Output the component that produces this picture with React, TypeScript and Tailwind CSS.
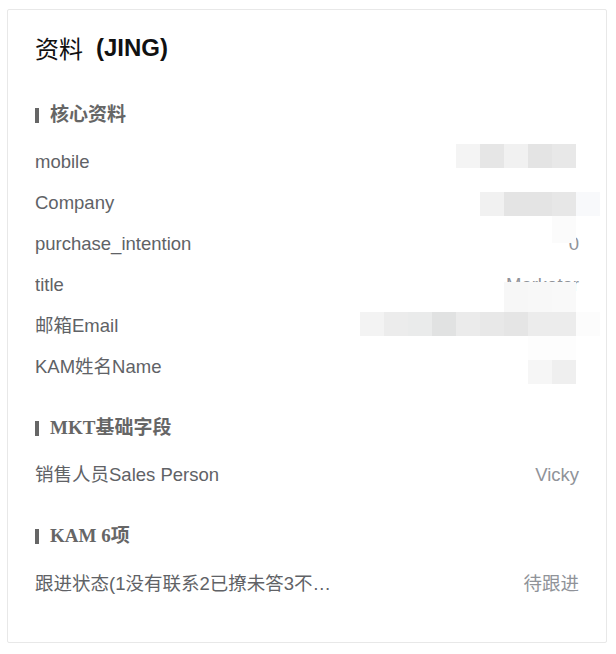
import React from 'react';

type Cell = string;

type Patch = { left: number; top: number; h: string; cells: Cell[] };

type Row = { label: string; value?: string; patches?: Patch[] };

const sans = { fontFamily: '"Liberation Sans", "Noto Sans CJK SC", sans-serif' };

const coreRows: Row[] = [
  {
    label: 'mobile',
    patches: [{ left: 421, top: 3, h: 'h-[24px]', cells: ['bg-[#f4f4f4]', 'bg-[#e6e6e6]', 'bg-[#f1f1f1]', 'bg-[#e4e4e4]', 'bg-[#e8e8e8]'] }],
  },
  {
    label: 'Company',
    patches: [{ left: 445, top: 10, h: 'h-[24px]', cells: ['bg-[#f1f1f1]', 'bg-[#e4e4e4]', 'bg-[#e4e4e4]', 'bg-[#e7e7e7]', 'bg-[#f8f9fb]'] }],
  },
  {
    label: 'purchase_intention',
    value: '0',
    patches: [{ left: 517, top: -7, h: 'h-[27px]', cells: ['bg-[#fbfbfb]'] }],
  },
  {
    label: 'title',
    value: 'Marketer',
    patches: [{ left: 469, top: 18, h: 'h-[30px]', cells: ['bg-[#f7f7f7]', 'bg-[#f8f8f8]', 'bg-[#f9f9f9]'] }],
  },
  {
    label: '邮箱Email',
    patches: [
      {
        left: 325,
        top: 7,
        h: 'h-[24px]',
        cells: [
          'bg-[#f3f3f3]', 'bg-[#ececec]', 'bg-[#eaebeb]', 'bg-[#e1e2e2]', 'bg-[#ebebeb]',
          'bg-[#e8e8e8]', 'bg-[#e5e5e5]', 'bg-[#ececec]', 'bg-[#ececec]', 'bg-[#fcfcfc]',
        ],
      },
    ],
  },
  {
    label: 'KAM姓名Name',
    patches: [
      { left: 493, top: -10, h: 'h-[24px]', cells: ['bg-[#fdfdfd]', 'bg-[#fdfdfd]'] },
      { left: 493, top: 14, h: 'h-[24px]', cells: ['bg-[#f6f6f6]', 'bg-[#efefef]'] },
    ],
  },
];

function SectionTitle({ children, mt }: { children: React.ReactNode; mt: string }) {
  return (
    <div className={`${mt} h-[24px] flex items-center`}>
      <span className="w-[4px] h-[15px] bg-[#666666]" />
      <span
        className="ml-[11px] text-[19px] leading-[24px] font-bold text-[#666666]"
        style={{ fontFamily: '"Liberation Serif", "Noto Sans CJK SC", serif' }}
      >
        {children}
      </span>
    </div>
  );
}

function InfoRow({ row }: { row: Row }) {
  return (
    <div className="relative h-[41px] flex items-center justify-between text-[18.5px]" style={sans}>
      <span className="w-[298px] truncate text-[#606266]">{row.label}</span>
      {row.value && <span className="text-[#909399]">{row.value}</span>}
      {row.patches?.map((p, i) => (
        <div key={i} className="absolute flex" style={{ left: p.left, top: p.top }}>
          {p.cells.map((c, j) => (
            <div key={j} className={`w-[24px] ${p.h} ${c}`} />
          ))}
        </div>
      ))}
    </div>
  );
}

export default function App() {
  return (
    <div className="w-[616px] h-[654px] bg-white pt-[9px] pl-[7px]">
      <div className="w-[600px] h-[634px] border border-[#e8e8e8] rounded-[2px] px-[27px] pt-[24px] overflow-hidden">
        <div className="h-[28px] flex items-center text-[24px] leading-[28px] text-[#111111]">
          <span className="font-normal" style={{ fontFamily: '"Noto Sans CJK SC", sans-serif' }}>资料</span>
          <span className="ml-[13px] font-bold" style={sans}>(JING)</span>
        </div>

        <SectionTitle mt="mt-[41px]">核心资料</SectionTitle>
        <div className="mt-[14px]">
          {coreRows.map((r) => (
            <InfoRow key={r.label} row={r} />
          ))}
        </div>

        <SectionTitle mt="mt-[29px]">MKT基础字段</SectionTitle>
        <div className="mt-[14px]">
          <InfoRow row={{ label: '销售人员Sales Person', value: 'Vicky' }} />
        </div>

        <SectionTitle mt="mt-[29px]">KAM 6项</SectionTitle>
        <div className="mt-[15px]">
          <InfoRow row={{ label: '跟进状态(1没有联系2已撩未答3不感兴趣4有意向5已成交)', value: '待跟进' }} />
        </div>
      </div>
    </div>
  );
}
